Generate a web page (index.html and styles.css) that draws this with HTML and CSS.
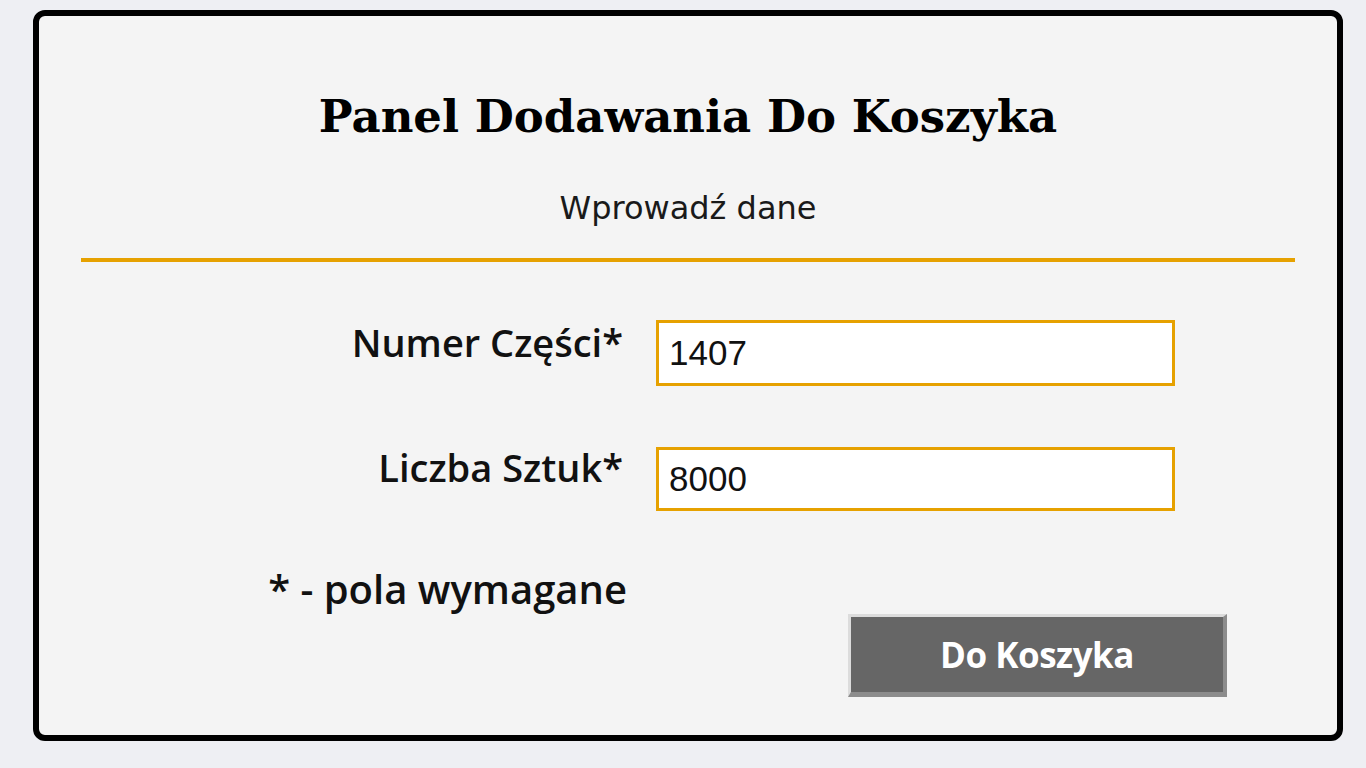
FILE: index.html
```html
<!DOCTYPE html>
<html lang="pl">
<head>
<meta charset="utf-8">
<title>Panel Dodawania Do Koszyka</title>
<link rel="stylesheet" href="styles.css">
</head>
<body>
<div class="panel">
  <h1 class="title">Panel Dodawania Do Koszyka</h1>
  <p class="subtitle">Wprowadź dane</p>
  <div class="rule"></div>
  <form class="form">
    <label class="label" for="part">Numer Części*</label>
    <input class="field field-1" id="part" type="text" value="1407">
    <label class="label label-2" for="qty">Liczba Sztuk*</label>
    <input class="field field-2" id="qty" type="text" value="8000">
    <p class="note">* - pola wymagane</p>
    <div class="actions"><button class="btn" type="button">Do Koszyka</button></div>
  </form>
</div>
</body>
</html>
```
FILE: styles.css
```css
html, body {
  margin: 0;
  padding: 0;
}
body {
  background: #eeeff3;
  width: 1366px;
  height: 768px;
  overflow: hidden;
}
.panel {
  box-sizing: border-box;
  margin: 10px 0 0 33px;
  width: 1310px;
  height: 731px;
  border: 6px solid #000;
  border-radius: 12px;
  background: #f4f4f4;
  padding-top: 77px;
}
.title {
  margin: 0;
  text-align: center;
  font-family: "DejaVu Serif", Georgia, serif;
  font-weight: bold;
  font-size: 45px;
  line-height: 48px;
  color: #000;
  letter-spacing: 0;
}
.subtitle {
  margin: 49px 0 0;
  text-align: center;
  font-family: "DejaVu Sans", Verdana, sans-serif;
  font-size: 32px;
  line-height: 36px;
  color: #1a1a1a;
}
.rule {
  margin: 32px 42px 0;
  height: 4px;
  background: #e6a100;
}
.form {
  display: grid;
  grid-template-columns: 584px 519px;
  column-gap: 33px;
  margin-top: 58px;
}
.label {
  text-align: right;
  font-family: "Open Sans", sans-serif;
  font-weight: 600;
  font-size: 38px;
  line-height: 44px;
  color: #111;
  padding-top: 0;
}
.label-2 { margin-top: 59px; }
.field {
  box-sizing: border-box;
  width: 519px;
  height: 66px;
  border: 3px solid #e6a100;
  background: #fff;
  padding: 0 10px;
  font-family: "Liberation Sans", Arial, sans-serif;
  font-size: 35px;
  color: #111;
  outline: none;
  margin: 0;
}
.field-2 { margin-top: 61px; height: 64px; }
.note {
  grid-column: 1;
  grid-row: 3;
  margin: 55px -4px 0 0;
  text-align: right;
  font-family: "Open Sans", sans-serif;
  font-weight: 600;
  font-size: 40px;
  line-height: 46px;
  color: #111;
}
.actions {
  grid-column: 2;
  grid-row: 4;
  padding-left: 192px;
  margin-top: 2px;
}
.btn {
  box-sizing: border-box;
  width: 379px;
  height: 83px;
  background: #666;
  color: #fff;
  border-style: solid;
  border-width: 3px 4px 5px 3px;
  border-color: #dcdcdc #8c8c8c #8c8c8c #dcdcdc;
  font-family: "Open Sans", sans-serif;
  font-weight: 700;
  font-size: 35px;
  letter-spacing: -0.5px;
  padding: 0;
}
```
